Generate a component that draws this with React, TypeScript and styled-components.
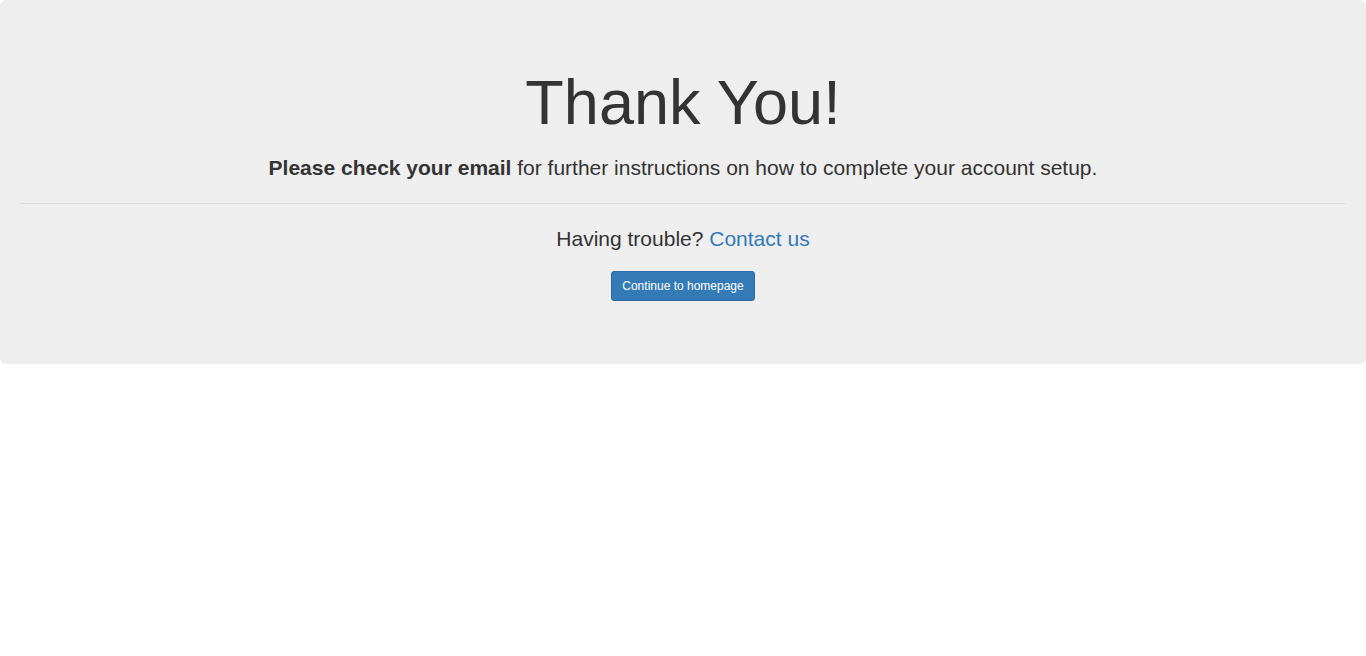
import React from "react";
import styled, { createGlobalStyle } from "styled-components";

const Global = createGlobalStyle`
  html, body { margin: 0; padding: 0; background: #fff; }
  body {
    font-family: "Liberation Sans", Arial, Helvetica, sans-serif;
    font-size: 14px;
    line-height: 1.42857143;
    color: #333;
  }
  * { box-sizing: border-box; }
`;

const Jumbotron = styled.div`
  background: #eee;
  border-radius: 6px;
  padding: 48px 20px;
  text-align: center;
`;

const Title = styled.h1`
  font-size: 63px;
  font-weight: 500;
  line-height: 1.1;
  margin: 20px 0 16px;
  color: #333;
`;

const Lead = styled.p<{ $mb?: number }>`
  font-size: 21px;
  font-weight: 400;
  margin: 0 0 ${(p) => (p.$mb ?? 15)}px;
`;

const Rule = styled.hr`
  border: 0;
  border-top: 1px solid #d9d9d9;
  margin: 20px 0;
`;

const Link = styled.a`
  color: #337ab7;
  text-decoration: none;
`;

const ButtonRow = styled.div`
  padding-top: 2px;
  margin-bottom: 15px;
`;

const Button = styled.a`
  display: inline-block;
  font-size: 12px;
  line-height: 1.5;
  padding: 5px 10px;
  border-radius: 3px;
  background: #337ab7;
  border: 1px solid #2e6da4;
  color: #fff;
  text-decoration: none;
  font-weight: 400;
`;

export default function App() {
  return (
    <>
      <Global />
      <Jumbotron>
        <Title>Thank You!</Title>
        <Lead $mb={13}>
          <strong>Please check your email</strong> for further instructions on how to complete your account setup.
        </Lead>
        <Rule />
        <Lead>
          Having trouble? <Link href="#">Contact us</Link>
        </Lead>
        <ButtonRow>
          <Button href="#">Continue to homepage</Button>
        </ButtonRow>
      </Jumbotron>
    </>
  );
}
